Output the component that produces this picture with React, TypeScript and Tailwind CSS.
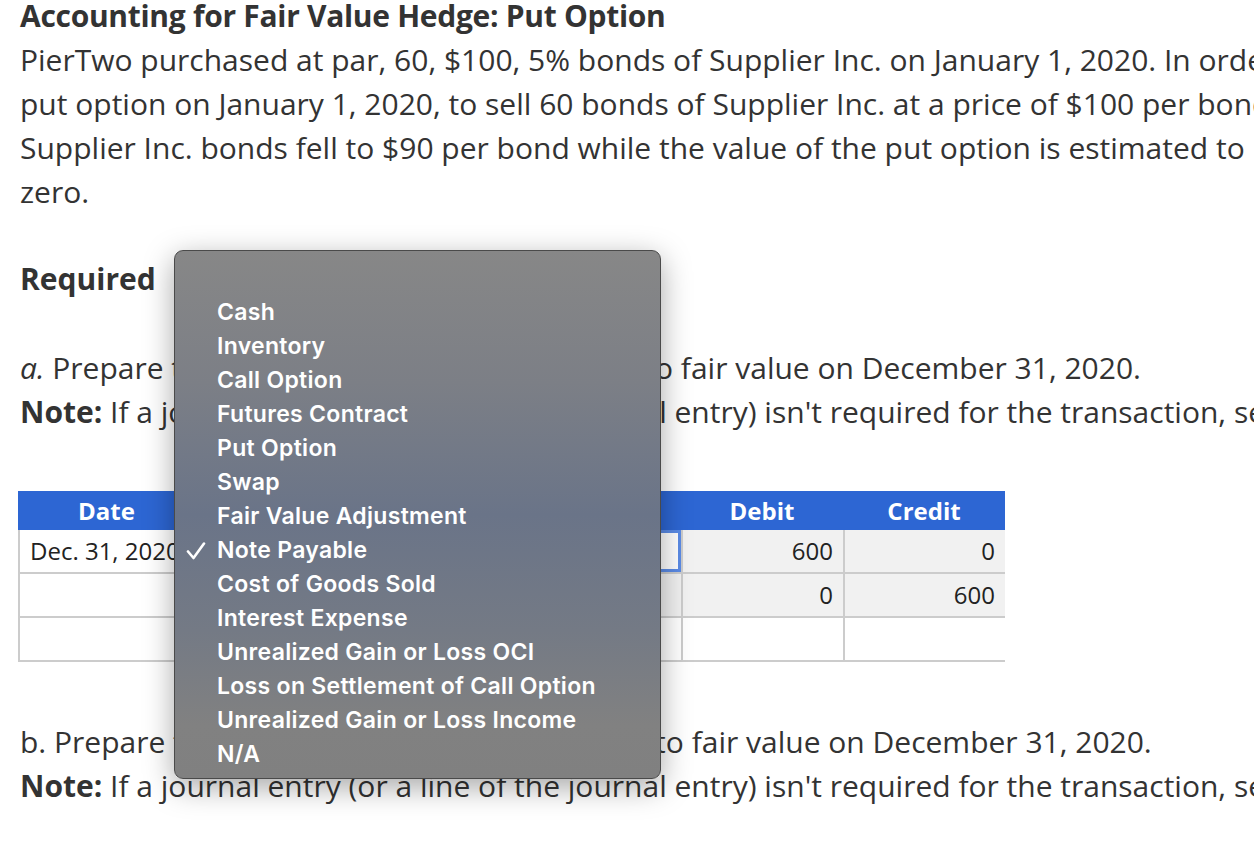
import React from "react";

const items = [
  "Cash",
  "Inventory",
  "Call Option",
  "Futures Contract",
  "Put Option",
  "Swap",
  "Fair Value Adjustment",
  "Note Payable",
  "Cost of Goods Sold",
  "Interest Expense",
  "Unrealized Gain or Loss OCI",
  "Loss on Settlement of Call Option",
  "Unrealized Gain or Loss Income",
  "N/A",
];

export default function App() {
  return (
    <div className="relative w-[1254px] h-[842px] overflow-hidden bg-white text-[#333] font-['Open_Sans',sans-serif]">
      <div className="pl-[20px] whitespace-nowrap">
        <h1 className="text-[30px] font-bold leading-[32px] tracking-[-0.3px]">Accounting for Fair Value Hedge: Put Option</h1>
        <div className="text-[30px] leading-[44px] mt-[6px]">
          <p>PierTwo purchased at par, 60, $100, 5% bonds of Supplier Inc. on January 1, 2020. In order to hedge</p>
          <p>put option on January 1, 2020, to sell 60 bonds of Supplier Inc. at a price of $100 per bond. On Dec</p>
          <p>Supplier Inc. bonds fell to $90 per bond while the value of the put option is estimated to be $600,</p>
          <p>zero.</p>
        </div>
        <h2 className="text-[30px] font-bold leading-[44px] mt-[43px]">Required</h2>
        <div className="text-[30px] leading-[44px] mt-[45px]">
          <p><i>a.</i> Prepare the entry to adjust the put option to fair value on December 31, 2020.</p>
          <p><b>Note:</b> If a journal entry (or a line of the journal entry) isn't required for the transaction, select "No journal entry required"</p>
        </div>
      </div>

      <div className="ml-[18px] mt-[57px] w-[987px]">
        <div className="grid grid-cols-[177px_486px_162px_162px] bg-[#2d66d3] h-[39px] text-white font-bold text-[24px] items-center text-center">
          <div>Date</div>
          <div>Account</div>
          <div>Debit</div>
          <div>Credit</div>
        </div>
        <div className="grid grid-cols-[175px_484px_160px_160px] gap-[2px] bg-[#cccccc] p-[2px] pt-0 text-[24px] text-[#222]">
          <div className="bg-white h-[42px] flex items-center pl-[10px] overflow-hidden whitespace-nowrap">Dec. 31, 2020</div>
          <div className="bg-white h-[42px] border-[3px] border-[#5b8be6]"></div>
          <div className="bg-[#f1f1f1] h-[42px] flex items-center justify-end pr-[10px]">600</div>
          <div className="bg-[#f1f1f1] h-[42px] flex items-center justify-end pr-[10px]">0</div>

          <div className="bg-white h-[42px]"></div>
          <div className="bg-[#f1f1f1] h-[42px]"></div>
          <div className="bg-[#f1f1f1] h-[42px] flex items-center justify-end pr-[10px]">0</div>
          <div className="bg-[#f1f1f1] h-[42px] flex items-center justify-end pr-[10px]">600</div>

          <div className="bg-white h-[42px]"></div>
          <div className="bg-white h-[42px]"></div>
          <div className="bg-white h-[42px]"></div>
          <div className="bg-white h-[42px]"></div>
        </div>
      </div>

      <div className="pl-[20px] whitespace-nowrap text-[30px] leading-[44px] mt-[58px]">
        <p>b. Prepare the entry to adjust the bond value to fair value on December 31, 2020.</p>
        <p><b>Note:</b> If a journal entry (or a line of the journal entry) isn't required for the transaction, select "No journal entry required"</p>
      </div>

      <div className="absolute left-[174px] top-[250px] w-[487px] h-[529px] rounded-[9px] border border-[#4a4a4a] shadow-[0_8px_30px_rgba(0,0,0,0.35)] bg-[linear-gradient(180deg,#878787_0%,#7c7f86_25%,#6a7488_50%,#747a85_72%,#818181_90%,#808080_100%)] font-['Inter',sans-serif] text-white text-[23px] font-semibold pt-[44px]">
        {items.map((it) => (
          <div key={it} className="relative h-[34px] leading-[34px] pl-[42px] tracking-[0.3px]">
            {it === "Note Payable" && (
              <svg className="absolute left-[11px] top-[9px]" width="20" height="18" viewBox="0 0 20 18" fill="none">
                <path d="M2 9.5 L7.5 16 L18 1.5" stroke="white" strokeWidth="2.6" strokeLinecap="round" strokeLinejoin="round" />
              </svg>
            )}
            {it}
          </div>
        ))}
      </div>
    </div>
  );
}
